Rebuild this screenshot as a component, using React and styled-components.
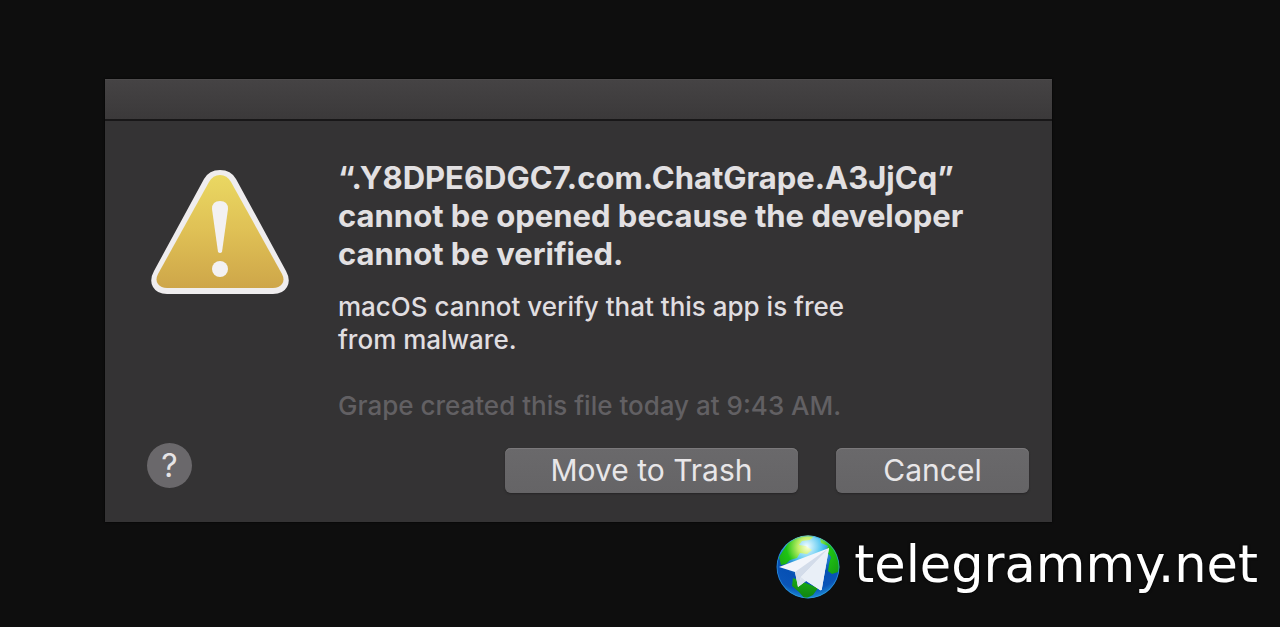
import React from 'react';
import styled, { createGlobalStyle } from 'styled-components';

const GlobalStyle = createGlobalStyle`
    * {
        box-sizing: border-box;
    }
    body {
        margin: 0;
        background: #0e0e0e;
        font-family: Inter, "Liberation Sans", sans-serif;
    }
`;

const Page = styled.main`
    padding: 79px 22px 20px 105px;
`;

// Alert window
const Dialog = styled.section`
    margin-right: 206px;
    background: #343334;
    box-shadow: 0 0 2px #000;
`;

const TitleBar = styled.div`
    height: 42px;
    background: linear-gradient(#454344, #3b393a);
    border-top: 1px solid #4c4a4b;
    border-bottom: 2px solid #181718;
`;

const Content = styled.div`
    display: flex;
    gap: 44px;
    padding: 38px 24px 21px 42px;
`;

const WarningIcon = styled.svg`
    flex: none;
    width: 147px;
    height: 144px;
`;

const Message = styled.div`
    flex: 1;
`;

const Title = styled.h1`
    max-width: 640px;
    margin: 0 0 17px;
    font-size: 31px;
    line-height: 38px;
    font-weight: 700;
    color: #e2e0e2;
`;

const Text = styled.p`
    max-width: 530px;
    margin: 0 0 33px;
    font-size: 26px;
    font-weight: 500;
    line-height: 33px;
    color: ${({ $muted }) => ($muted ? '#626063' : '#e0dee0')};
    &:last-child {
        margin-bottom: 0;
    }
`;

// Bottom row: help on the left, actions on the right
const Footer = styled.footer`
    display: flex;
    justify-content: space-between;
    min-height: 79px;
    padding: 0 23px 29px 42px;
`;

const HelpButton = styled.button`
    width: 45px;
    height: 45px;
    padding: 0;
    border: 0;
    border-radius: 50%;
    background: #6a686b;
    color: #e6e4e6;
    font: 400 32px/45px Inter, sans-serif;
`;

const Actions = styled.div`
    display: flex;
    align-self: flex-end;
    gap: 38px;
`;

const Button = styled.button`
    width: ${({ $wide }) => ($wide ? '293px' : '193px')};
    height: 45px;
    padding: 0;
    border: 0;
    border-radius: 6px;
    background: linear-gradient(#6a696b, #656466);
    box-shadow: inset 0 1px #7b797b, 0 1px 2px #262526;
    color: #e8e6e8;
    font: 400 30px/45px Inter, sans-serif;
`;

const Brand = styled.a`
    display: flex;
    align-items: center;
    justify-content: flex-end;
    gap: 14px;
    margin-top: 13px;
    color: #fff;
    text-decoration: none;
`;

const Globe = styled.svg`
    flex: none;
    width: 64px;
    height: 64px;
`;

const BrandName = styled.span`
    font-family: "DejaVu Sans", sans-serif;
    font-size: 51px;
    line-height: 58px;
    text-shadow: 0 0 3px #000;
    padding-bottom: 4px;
`;

const Warning = () => (
    <WarningIcon viewBox="0 0 147 144" role="img" aria-label="Warning">
        <defs>
            <linearGradient id="amber" x1="0" y1="0" x2="0" y2="1">
                <stop offset="0" stopColor="#ead862" />
                <stop offset="0.5" stopColor="#dfc055" />
                <stop offset="1" stopColor="#cea649" />
            </linearGradient>
        </defs>
        <path
            d="M57 20 Q62 11 73 11 Q84 11 89 20 L139 112 Q144 121 140 128 Q136 135 126 135 H20 Q10 135 6 128 Q2 121 7 112 Z"
            fill="#efedee"
        />
        <path
            d="M62 23 Q66 16 73 16 Q80 16 84 23 L135 115 Q138 121 135 125 Q132 129 126 129 H20 Q14 129 11 125 Q8 121 11 115 Z"
            fill="url(#amber)"
        />
        <path d="M65 50 Q65 42 73 42 Q81 42 81 50 L75 93 Q73 95 71 93 Z" fill="#f3f1f2" />
        <circle cx="73" cy="110" r="8" fill="#f3f1f2" />
    </WarningIcon>
);

const GlobeLogo = () => (
    <Globe viewBox="0 0 64 64" aria-hidden="true">
        <defs>
            <radialGradient id="sea" cx="0.48" cy="0.18" r="0.8">
                <stop offset="0" stopColor="#f4feff" />
                <stop offset="0.3" stopColor="#4fc4f0" />
                <stop offset="0.6" stopColor="#0650b4" />
                <stop offset="0.85" stopColor="#0a55b8" />
                <stop offset="1" stopColor="#1b87d3" />
            </radialGradient>
            <radialGradient id="land" cx="32" cy="12" r="48" gradientUnits="userSpaceOnUse">
                <stop offset="0" stopColor="#fcffd8" />
                <stop offset="0.2" stopColor="#c4f06a" />
                <stop offset="0.45" stopColor="#1fc414" />
                <stop offset="1" stopColor="#128a12" />
            </radialGradient>
            <clipPath id="disc">
                <circle cx="32" cy="32" r="31.5" />
            </clipPath>
        </defs>
        <g clipPath="url(#disc)">
            <rect width="64" height="64" fill="url(#sea)" />
            <path
                d="M5 30 L3 22 L12 8 L20 3 Q29 -1 38 1 L34 5 L26 6 L23 10 L30 11 L36 15 L31 19 L24 18 L21 23 L14 25 L10 29 Z M44 3 Q55 7 60 17 L64 32 L62 37 L56 39 L52 36 L53 29 L55 22 L50 16 L52 11 L45 8 Z M17 43 L27 47 L42 53 L37 60 L29 64 L23 57 L16 51 Z"
                fill="url(#land)"
            />
            <circle cx="32" cy="32" r="31" fill="none" stroke="#3aa8e4" strokeOpacity="0.6" />
        </g>
        <path d="M53 13 L3 32 L19 37 L22 52 L30 46 L44 55 Q46 56 46 53 Z" fill="#f2f5fb" />
        <path d="M53 13 L19 37 L22 52 L25 42 Z" fill="#d3dcea" />
        <path d="M25 42 L22 52 L30 46 Z" fill="#dce4ef" />
        <path d="M53 13 L25 42 L44 55 Q46 56 46 53 Z" fill="#e9eff7" />
    </Globe>
);

const App = () => {
    return (
        <>
            <GlobalStyle />
            <Page>
                <Dialog role="alertdialog" aria-labelledby="alert-title">
                    <TitleBar />
                    <Content>
                        <Warning />
                        <Message>
                            <Title id="alert-title">
                                “.Y8DPE6DGC7.com.ChatGrape.A3JjCq” cannot be opened because the developer cannot be verified.
                            </Title>
                            <Text>macOS cannot verify that this app is free from malware.</Text>
                            <Text $muted>Grape created this file today at 9:43 AM.</Text>
                        </Message>
                    </Content>
                    <Footer>
                        <HelpButton aria-label="Help">?</HelpButton>
                        <Actions>
                            <Button $wide>Move to Trash</Button>
                            <Button>Cancel</Button>
                        </Actions>
                    </Footer>
                </Dialog>
                <Brand href="#">
                    <GlobeLogo />
                    <BrandName>telegrammy.net</BrandName>
                </Brand>
            </Page>
        </>
    );
};

export default App;
